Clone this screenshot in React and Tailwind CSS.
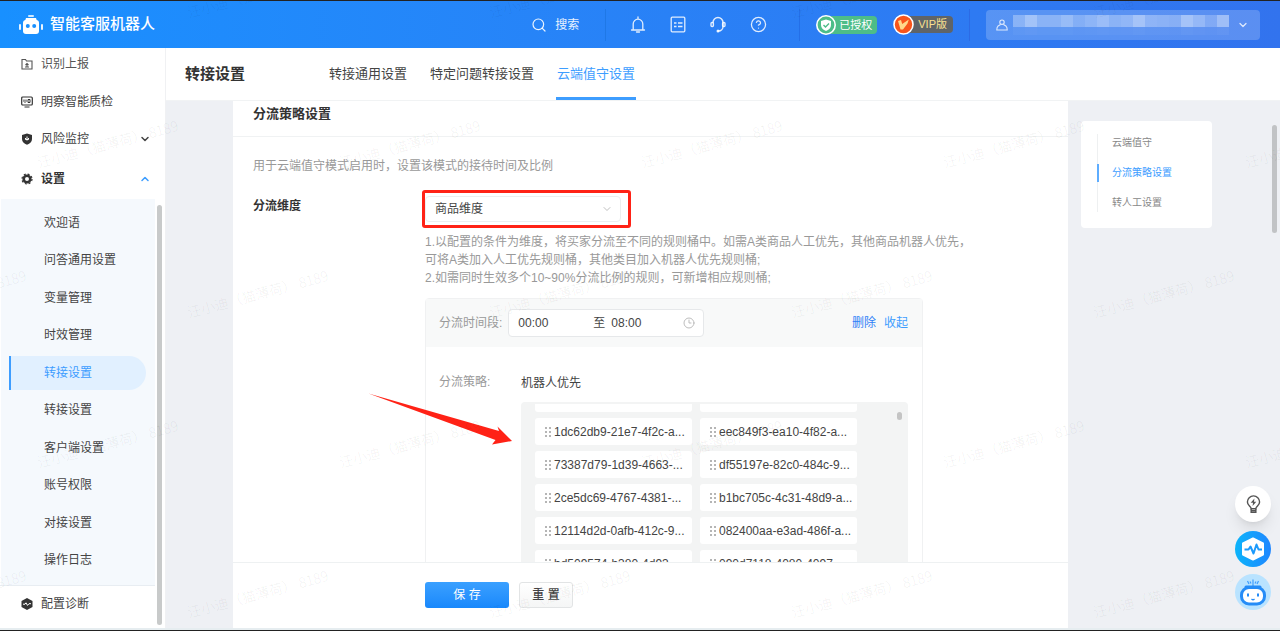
import React, { useState } from "react";
import { ChevronDown, ChevronUp, Search, Clock3, CircleHelp } from "lucide-react";

const subMenu = [
  "欢迎语",
  "问答通用设置",
  "变量管理",
  "时效管理",
  "转接设置",
  "转接设置",
  "客户端设置",
  "账号权限",
  "对接设置",
  "操作日志",
];

const tabs = ["转接通用设置", "特定问题转接设置", "云端值守设置"];

const anchors = ["云端值守", "分流策略设置", "转人工设置"];

const goods = [
  "1dc62db9-21e7-4f2c-a...",
  "eec849f3-ea10-4f82-a...",
  "73387d79-1d39-4663-...",
  "df55197e-82c0-484c-9...",
  "2ce5dc69-4767-4381-...",
  "b1bc705c-4c31-48d9-a...",
  "12114d2d-0afb-412c-9...",
  "082400aa-e3ad-486f-a...",
  "bd509574-b380-4d93-...",
  "090d7118-4080-4097-...",
];

// opacity of each block covering the account name
const nameMask = [30, 45, 30, 30, 38, 26, 32, 40, 30, 34, 46, 32, 30, 28, 46, 36, 24, 42];

// staggered watermark grid, one entry per stamp
const watermarks = [];
for (let row = 0; row < 5; row++) {
  for (let col = 0; col < 6; col++) {
    watermarks.push({
      left: (row % 2 === 0 ? -117 : -267) + col * 302,
      top: -18 + row * 150,
    });
  }
}

function RobotLogo() {
  return (
    <svg width="24" height="20" viewBox="0 0 24 20" fill="#fff">
      <rect x="9" y="0" width="6" height="2" rx="1" opacity="0.8" />
      <path d="M7 3h10l1 3H6z" />
      <rect x="4" y="5" width="16" height="14" rx="3" />
      <rect x="0" y="9" width="2" height="6" rx="1" opacity="0.9" />
      <rect x="22" y="9" width="2" height="6" rx="1" opacity="0.9" />
      <circle cx="8.8" cy="11" r="2" fill="#1890ff" />
      <circle cx="15.2" cy="11" r="2" fill="#1890ff" />
    </svg>
  );
}

function BellIcon() {
  return (
    <svg width="16" height="18" viewBox="0 0 16 18" fill="none" stroke="currentColor" strokeWidth="1.3" strokeLinecap="round">
      <path d="M8 1v1.500M3.200 14V8a4.800 4.800 0 0 1 9.600 0v6M1.500 14h13M6.500 16h3" />
    </svg>
  );
}

function ListIcon() {
  return (
    <svg width="16" height="18" viewBox="0 0 16 18" fill="none" stroke="currentColor" strokeWidth="1.3">
      <rect x="1.200" y="1.200" width="13.600" height="14.600" rx="1" />
      <path d="M4 7h2.500M4 10.500h2.500M8 7h4.500M8 10.500h4.500" />
    </svg>
  );
}

function HeadsetIcon() {
  return (
    <svg width="16" height="18" viewBox="0 0 16 18" fill="none" stroke="currentColor" strokeWidth="1.4" strokeLinecap="round">
      <path d="M3 6.500a5 5 0 0 1 10 0v4a4.500 4.500 0 0 1-4.500 4.500" />
      <rect x="1" y="6.500" width="2.400" height="4" rx="1" />
      <rect x="12.600" y="6.500" width="2.400" height="4" rx="1" />
      <circle cx="8" cy="15" r="0.800" fill="currentColor" />
    </svg>
  );
}

function TopBar() {
  return (
    <header className="flex h-[47px] shrink-0 items-center justify-between bg-linear-to-r from-[#1890ff] to-[#3273ee] pr-5 pl-[19px] text-white">
      <div className="flex items-center gap-[7px]">
        <RobotLogo />
        <h1 className="text-[15px] font-medium">智能客服机器人</h1>
      </div>

      <div className="flex items-center">
        <button className="flex items-center gap-2 text-xs text-white/90">
          <Search size={16} strokeWidth={1.8} />
          搜索
        </button>

        <div className="ml-[26px] h-8 w-px bg-[#1f78e6]" />

        <div className="flex items-center gap-6 pl-6 text-white/85">
          <button aria-label="通知"><BellIcon /></button>
          <button aria-label="列表"><ListIcon /></button>
          <button aria-label="客服"><HeadsetIcon /></button>
          <button aria-label="帮助"><CircleHelp size={17} strokeWidth={1.8} /></button>
        </div>

        <div className="ml-8 h-8 w-px bg-[#246fe8]" />

        {/* Licence badges */}
        <div className="ml-4 flex items-center">
          <svg width="20" height="20" viewBox="0 0 20 20" className="z-10">
            <circle cx="10" cy="10" r="9.200" fill="#4dbd88" stroke="#fff" strokeWidth="1.600" />
            <path d="M10 4.500l5 1.500v4c0 3-2.200 4.700-5 6-2.800-1.300-5-3-5-6V6z" fill="#fff" />
            <path d="M7.500 10l2 2 3.500-3.500" fill="none" stroke="#4dbd88" strokeWidth="1.400" />
          </svg>
          <span className="-ml-2 rounded-sm bg-[#4dbd88] pr-[5px] pl-[11px] text-[11px] leading-[18px]">已授权</span>
        </div>

        <div className="ml-4 flex items-center">
          <svg width="21" height="21" viewBox="0 0 21 21" className="z-10">
            <circle cx="10.500" cy="10.500" r="9.500" fill="#f9551b" stroke="#fff" strokeWidth="1.600" />
            <path d="M5 7l3-1 1.200 4L15.800 5.500l-1.300 4L10 15.500H7.500z" fill="#ffd98a" />
          </svg>
          <span className="-ml-2 rounded-sm bg-[#5f6468] pr-[6px] pl-[12px] text-[11px] leading-[17px] text-[#fbe08f]">VIP版</span>
        </div>

        <div className="ml-4 h-8 w-px bg-[#2c6be6]" />

        <button aria-label="账号" className="ml-4 flex h-[30px] items-center rounded-sm bg-white/20 pr-[11px] pl-[10px]">
          <svg width="12" height="12" viewBox="0 0 12 12" fill="none" stroke="#fff" strokeOpacity="0.8" strokeWidth="1.100">
            <circle cx="6" cy="3.200" r="2.200" />
            <path d="M4.500 5.500L1.800 7.300C1 8 .8 9 .8 11h10.400c0-2-.2-3-1-3.700L7.500 5.500" />
          </svg>
          <span className="mr-2 ml-[5px] flex">
            {nameMask.map((opacity, i) => (
              <span key={i} className="flex w-3 flex-col">
                <span className="h-3 bg-white" style={{ opacity: opacity / 100 }} />
                <span className="h-2 bg-white" style={{ opacity: opacity / 800 }} />
              </span>
            ))}
          </span>
          <ChevronDown size={12} strokeWidth={2.5} className="opacity-80" />
        </button>
      </div>
    </header>
  );
}

function SideBar() {
  const [active, setActive] = useState(4);

  return (
    <aside className="flex w-[166px] shrink-0 border-r border-[#f0f1f3] bg-white text-xs text-[#444]">
      <nav className="flex min-w-0 flex-1 flex-col">
        <a href="#report" className="flex h-[31px] items-center gap-2 pl-[21px] text-[#555]">
          <svg width="12" height="12" viewBox="0 0 12 12" fill="none" stroke="#555" strokeWidth="1.100">
            <path d="M1 1.500h3.500l1 1.500H11v8H1z" />
            <path d="M6 9V5.500M4.500 7L6 5.500 7.500 7M4 9h4" />
          </svg>
          识别上报
        </a>
        <a href="#quality" className="flex h-[45px] items-center gap-2 pl-[21px]">
          <svg width="12" height="12" viewBox="0 0 12 12" fill="none" stroke="#333" strokeWidth="1.200">
            <rect x="0.700" y="1" width="10.600" height="8" rx="1" />
            <path d="M3 3.500v2l1 1 1-1v-2M7 3.500h2v3H7zM3.500 11h5" strokeWidth="1" />
          </svg>
          明察智能质检
        </a>
        <button className="flex h-[30px] items-center gap-2 pr-1 pl-[21px]">
          <svg width="12" height="12" viewBox="0 0 12 12">
            <path d="M6 0.500l5 1.500v4c0 3-2 4.500-5 5.700C3 10.500 1 9 1 6V2z" fill="#333" />
            <path d="M6 3.500v4M4.500 5v1.500h3V5" fill="none" stroke="#fff" />
          </svg>
          风险监控
          <ChevronDown size={12} strokeWidth={3} className="ml-auto" />
        </button>
        <button className="flex h-[45px] items-center gap-2 pt-1 pr-1 pl-[21px] font-bold text-[#333]">
          <svg width="12" height="12" viewBox="0 0 12 12">
            <circle cx="6" cy="6" r="3.300" fill="none" stroke="#333" strokeWidth="2.600" />
            <circle cx="6" cy="6" r="5" fill="none" stroke="#333" strokeWidth="1.200" strokeDasharray="2 1.930" />
          </svg>
          设置
          <ChevronUp size={12} strokeWidth={3} className="ml-auto text-[#3d9dff]" />
        </button>

        <ul className="ml-px flex min-h-0 flex-1 flex-col bg-[#f5f9fd] pt-[5px] pb-[6px]">
          {subMenu.map((name, i) => (
            <li key={i} className="flex min-h-0 flex-1 items-center pr-[9px] pl-2">
              <button
                onClick={() => setActive(i)}
                className={
                  i === active
                    ? "h-[34px] w-full rounded-r-full border-l-2 border-[#3d9dff] bg-[#e1f0ff] pl-[33px] text-left text-[#3d9dff]"
                    : "h-[34px] w-full border-l-2 border-transparent pl-[33px] text-left"
                }
              >
                {name}
              </button>
            </li>
          ))}
        </ul>

        <a href="#diagnose" className="flex h-[43px] items-center gap-2 border-t border-[#e8edf2] pr-2 pb-[6px] pl-[21px]">
          <svg width="12" height="12" viewBox="0 0 12 12">
            <path d="M6 0l5.500 3v6L6 12 .5 9V3z" fill="#333" />
            <path d="M2 6.200h2l1-1.400 1.500 2.600L8 5.700h2" fill="none" stroke="#fff" />
          </svg>
          配置诊断
        </a>
      </nav>
      <div className="mt-[157px] mr-[3px] mb-[3px] ml-[2px] w-[5px] rounded-full bg-[#c8caca]" />
    </aside>
  );
}

function GoodsItem({ id }) {
  return (
    <li className="flex h-[27px] items-center gap-[3px] rounded-[3px] bg-white pl-[10px] text-xs whitespace-nowrap text-[#444]">
      <svg width="6" height="10" viewBox="0 0 6 10" fill="#b5b5b5">
        <path d="M0 0h2v2H0zM4 0h2v2H4zM0 4h2v2H0zM4 4h2v2H4zM0 8h2v2H0zM4 8h2v2H4z" />
      </svg>
      {id}
    </li>
  );
}

function RulePanel() {
  return (
    <div className="mt-[11px] w-[498px] rounded-sm border border-[#f0f1f2]">
      <div className="flex h-[48px] items-center bg-[#f8f9f9] pr-[14px] pl-[13px]">
        <label htmlFor="start" className="text-xs text-[#999]">分流时间段:</label>
        <div className="ml-[6px] flex h-7 w-[196px] items-center rounded-sm border border-[#e6e8ea] bg-white pl-[9px] text-xs text-[#444]">
          <input id="start" type="text" defaultValue="00:00" className="w-[75px] outline-none" />
          <span>至</span>
          <input aria-label="结束时间" type="text" defaultValue="08:00" className="ml-[6px] w-[72px] outline-none" />
          <Clock3 size={12} strokeWidth={1.800} className="text-[#b5b5b5]" />
        </div>
        <div className="ml-auto flex gap-2 text-xs">
          <button className="text-[#2f80f7]">删除</button>
          <button className="text-[#3d9dff]">收起</button>
        </div>
      </div>

      <div className="flex pt-[27px] pr-[14px] pl-[13px]">
        <div className="w-[82px] shrink-0 text-xs leading-4 text-[#999]">分流策略:</div>
        <div className="min-w-0 flex-1">
          <div className="text-xs leading-[18px] text-[#444]">机器人优先</div>
          <div className="mt-[10px] flex h-[200px] justify-between overflow-hidden rounded-sm bg-[#f3f4f4] pt-[2px] pr-[6px] pl-[14px]">
            <ul className="grid w-[322px] grid-cols-2 content-start gap-x-2 gap-y-[6px]">
              {/* tail of the row scrolled out of view */}
              <li className="h-2 rounded-b-[3px] bg-white" />
              <li className="h-2 rounded-b-[3px] bg-white" />
              {goods.map((id) => (
                <GoodsItem key={id} id={id} />
              ))}
            </ul>
            <div className="mt-2 h-2 w-[5px] rounded-full bg-[#c4c4c4]" />
          </div>
        </div>
      </div>
    </div>
  );
}

function SettingsCard() {
  return (
    <section className="flex min-w-0 flex-1 flex-col bg-white">
      <h2 className="h-9 border-b border-[#f0f2f3] pt-1 pl-5 text-[13px] leading-[18px] font-bold text-[#333]">
        分流策略设置
      </h2>

      <div className="min-h-0 flex-1 overflow-hidden pl-5">
        <p className="mt-5 text-xs leading-[18px] text-[#999]">
          用于云端值守模式启用时，设置该模式的接待时间及比例
        </p>

        <div className="mt-[21px] flex">
          <label htmlFor="dimension" className="w-[172px] shrink-0 text-xs leading-5 font-bold text-[#333]">
            分流维度
          </label>
          <div>
            {/* highlighted dimension select */}
            <div className="relative flex h-[26px] w-[196px] items-center">
              <select
                id="dimension"
                className="h-full w-full appearance-none rounded-sm border border-[#eceeef] bg-white pl-[9px] text-xs text-[#444]"
              >
                <option>商品维度</option>
              </select>
              <ChevronDown size={12} strokeWidth={1.500} className="absolute right-2 text-[#aaa]" />
              <div className="pointer-events-none absolute -inset-y-[6px] -right-[10px] -left-[3px] rounded-[3px] border-[3px] border-[#ff2216]" />
            </div>

            <p className="mt-[11px] text-xs leading-[18px] text-[#999]">
              1.以配置的条件为维度，将买家分流至不同的规则桶中。如需A类商品人工优先，其他商品机器人优先，
              <br />
              可将A类加入人工优先规则桶，其他类目加入机器人优先规则桶;
              <br />
              2.如需同时生效多个10~90%分流比例的规则，可新增相应规则桶;
            </p>

            <RulePanel />
          </div>
        </div>
      </div>

      <footer className="flex h-[66px] shrink-0 items-start gap-[10px] border-t border-[#eef1f2] pt-[19px] pl-[192px]">
        <button className="h-[26px] w-[84px] rounded-[3px] bg-linear-to-b from-[#3aa0ff] to-[#1888fc] text-xs text-white">
          保 存
        </button>
        <button className="h-[26px] w-[54px] rounded-[3px] border border-[#e2e4e5] bg-linear-to-b from-white to-[#f5f6f6] text-xs font-medium text-[#444]">
          重 置
        </button>
      </footer>
    </section>
  );
}

function AnchorNav() {
  return (
    <nav className="mt-5 ml-[13px] rounded-sm bg-white pt-[13px] pr-10 pb-4 pl-4 text-[10px]">
      <ul className="border-l border-[#eef0f1]">
        {anchors.map((name, i) => (
          <li key={name} className={i === 2 ? "flex" : "flex pb-3"}>
            <a
              href={"#" + name}
              className={
                i === 1
                  ? "-ml-px border-l-2 border-[#5eadff] pl-[13px] leading-[18px] text-[#3d9dff]"
                  : "pl-[14px] leading-[18px] text-[#888]"
              }
            >
              {name}
            </a>
          </li>
        ))}
      </ul>
    </nav>
  );
}

function FloatTools() {
  return (
    <div className="absolute right-[9px] bottom-5 z-20 flex flex-col items-center gap-[7px]">
      <button aria-label="提示" className="mb-[2px] flex h-9 w-9 items-center justify-center rounded-full bg-white shadow-lg">
        <svg width="15" height="19" viewBox="0 0 16 20" fill="none" stroke="#555" strokeWidth="1.500">
          <path d="M5.500 14.500c0-2.200-4-3.300-4-7.200a6.500 6.500 0 0 1 13 0c0 3.900-4 5-4 7.200z" />
          <path d="M5.500 14.500v3.700h5v-3.700M5.500 16.500h5" />
          <path d="M9 3.500L5 8h2.500L7 11.500 11 7H8.500z" fill="#555" stroke="none" />
        </svg>
      </button>
      <button aria-label="诊断" className="flex h-9 w-9 items-center justify-center rounded-full bg-linear-to-r from-[#0cb4fa] to-[#1f86ff]">
        <svg width="24" height="24" viewBox="0 0 24 24">
          <path d="M12 1.500L22 6.500v11L12 22.500 2 17.500v-11z" fill="#fff" stroke="#fff" strokeWidth="2" strokeLinejoin="round" />
          <path d="M3.500 12.500h4l2-3 3 7 3-9 2 5h3.500" fill="none" stroke="#1b9afc" strokeWidth="2" strokeLinejoin="round" />
        </svg>
      </button>
      <button aria-label="机器人" className="flex h-9 w-9 items-center justify-center rounded-full bg-[#b9e3ff]">
        <svg width="28" height="28" viewBox="0 0 28 28">
          <path d="M14 8V1.500M10 6L8.500 3M18 6l1.500-3M12 5.500L11 3.500M16 5.500L17 3.500" stroke="#3d9dff" strokeWidth="1.200" />
          <rect x="2.500" y="9.500" width="23" height="16.500" rx="7.500" fill="#fff" stroke="#258cf7" strokeWidth="3" />
          <path d="M7 9h14" stroke="#258cf7" strokeWidth="3" strokeLinecap="round" />
          <path d="M9 15.500v3M19 15.500v3" stroke="#258cf7" strokeWidth="2" />
          <path d="M12.500 21c1 1 2 1 3 0" fill="none" stroke="#258cf7" strokeWidth="1.200" />
        </svg>
      </button>
    </div>
  );
}

function App() {
  const [tab, setTab] = useState(2);

  return (
    <div className="relative flex h-screen flex-col overflow-hidden border-y border-[#222] bg-[#e6edf0] font-['Liberation_Sans','Noto_Sans_CJK_SC',sans-serif]">
      <TopBar />

      <div className="mb-[2px] flex min-h-0 flex-1">
        <SideBar />

        <main className="flex min-w-0 flex-1 flex-col">
          <div className="flex h-[53px] shrink-0 items-stretch border-b border-[#f1f3f4] bg-white pl-[19px]">
            <h2 className="mr-[83px] self-center text-[15px] font-bold text-[#333]">转接设置</h2>
            <div className="flex gap-[21px]">
              {tabs.map((name, i) => (
                <button
                  key={name}
                  onClick={() => setTab(i)}
                  className={
                    i === tab
                      ? "border-b-3 border-[#3d9dff] px-px pt-[3px] text-[13px] text-[#3d9dff]"
                      : "border-b-3 border-transparent px-px pt-[3px] text-[13px] text-[#444]"
                  }
                >
                  {name}
                </button>
              ))}
            </div>
          </div>

          <div className="flex min-h-0 flex-1 bg-[#eef0f4] pl-[67px]">
            <SettingsCard />
            <div className="flex w-[212px] shrink-0 items-start justify-between pr-[3px]">
              <AnchorNav />
              <div className="mt-6 h-[108px] w-[5px] rounded-full bg-[#c1c3c5]" />
            </div>
          </div>
        </main>
      </div>

      <FloatTools />

      {/* Arrow pointing at the goods list */}
      <svg width="144" height="54" viewBox="0 0 144 54" className="absolute top-[392px] left-[368px] z-20">
        <path d="M0.500 0.500L131 38l-1.500-4.500L144 48l-20 3.500 3.500-4.500z" fill="#ff2216" />
      </svg>

      {/* Watermark */}
      <div className="pointer-events-none absolute inset-0 z-30 overflow-hidden font-['Noto_Sans_CJK_SC',sans-serif]" aria-hidden="true">
        {watermarks.map((mark, i) => (
          <span
            key={i}
            className="absolute w-[148px] -rotate-15 text-sm font-light whitespace-nowrap text-black/7"
            style={{ left: mark.left, top: mark.top }}
          >
            汪小迪（猫薄荷） 8189
          </span>
        ))}
      </div>
    </div>
  );
}

export default App;
